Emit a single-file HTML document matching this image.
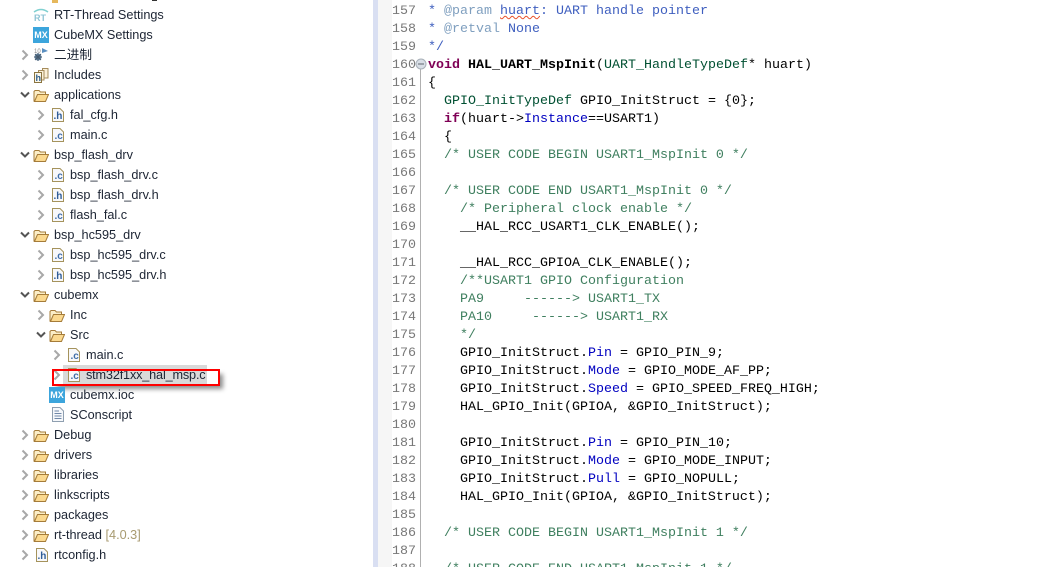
<!DOCTYPE html>
<html><head><meta charset="utf-8"><style>
html{margin:0;padding:0;background:#fff;width:1043px;height:567px;overflow:hidden}
body{margin:0;padding:0;background:#fff;width:1043px;height:567px;overflow:hidden;position:relative}
.r{position:absolute;height:20px;margin-top:1px;font:12.7px/20px "Liberation Sans","Noto Sans CJK SC",sans-serif;color:#1c2433;white-space:nowrap}
svg.i{position:absolute}
.l{position:absolute;left:428px;height:18px;margin-top:2px;font:13.33px/18px "Liberation Mono",monospace;color:#000;white-space:pre}
.n{position:absolute;left:392px;height:18px;margin-top:2px;font:13.33px/18px "Liberation Mono",monospace;color:#787878}
.c{color:#3f7f5f}.j{color:#3f5fbf}.t{color:#7f9fbf}.k{color:#7f0055;font-weight:bold}.f{color:#0000c0}.y{color:#005032}.b{font-weight:bold}
</style></head><body>
<svg width="0" height="0" style="position:absolute"><defs>
<symbol id="cl" viewBox="0 0 10 12"><path d="M2.5 1.500 7 6 2.500 10.500" fill="none" stroke="#a8a8a8" stroke-width="2"/></symbol>
<symbol id="op" viewBox="0 0 12 10"><path d="M2 2.500 6 6.500 10 2.500" fill="none" stroke="#555" stroke-width="2"/></symbol>
<symbol id="fo" viewBox="0 -1 16 14"><path d="M1 12.500V2.500L2 1.500H6L7.500 3H12.500V5.500H5L1.500 12.500" fill="#fbeec8" stroke="#a57c3a"/><path d="M1.500 12.500 4.500 5.500H15.500L12.500 12.500Z" fill="#fbd98f" stroke="#a57c3a"/></symbol>
<symbol id="fc" viewBox="0 0 12 14"><path d="M.5.500H8L11.500 4V13.500H.500Z" fill="#f8f8fa" stroke="#a5935c"/><text x="2.500" y="11" font-family="Liberation Sans" font-size="10" font-weight="bold" fill="#3f6da8">.c</text></symbol>
<symbol id="fh" viewBox="0 0 12 14"><path d="M.5.500H8L11.500 4V13.500H.500Z" fill="#f8f8fa" stroke="#a5935c"/><text x="1.500" y="11" font-family="Liberation Sans" font-size="10" font-weight="bold" fill="#2f5d98">.h</text></symbol>
</defs></svg>

<div style="position:absolute;left:52px;top:0;width:6px;height:3px;background:#e6b85c"></div>
<div style="position:absolute;left:152px;top:0;width:5px;height:1px;background:#333"></div>

<svg class="i" style="left:33px;top:8px" width="16" height="14" viewBox="0 0 16 14"><path d="M1 4Q8 -1 15 4" fill="none" stroke="#7fd0d0" stroke-width="1.500"/><text x="1" y="13" font-family="Liberation Sans" font-size="9" font-weight="bold" fill="#8fc4d4">RT</text></svg>
<div class="r" style="left:54px;top:4px">RT-Thread Settings</div>
<div style="position:absolute;left:33px;top:27px;width:16px;height:16px;background:#3ca5dc;color:#fff;font:bold 9px/16px 'Liberation Sans';text-align:center">MX</div>
<div class="r" style="left:54px;top:24px">CubeMX Settings</div>

<svg class="i" style="left:20px;top:49px" width="10" height="12"><use href="#cl"/></svg>
<svg class="i" style="left:33px;top:47px" width="16" height="16" viewBox="0 0 16 16"><path d="M9 1 15 4 9 6Z" fill="#5b8fc0"/><circle cx="5" cy="10" r="3.500" fill="#6a8ba8"/><path d="M1 10H9M5 6V14M2 7 8 13M8 7 2 13" stroke="#44586c"/><text x="1" y="6" font-family="Liberation Sans" font-size="6" fill="#888">10</text></svg>
<div class="r" style="left:54px;top:44px">二进制</div>

<svg class="i" style="left:20px;top:69px" width="10" height="12"><use href="#cl"/></svg>
<svg class="i" style="left:33px;top:67px" width="16" height="16" viewBox="0 0 16 16"><path d="M9.500 1.500H15V11H9.500Z" fill="#fbf0d8" stroke="#a58c5c"/><path d="M5.500 3.500H11V13H5.500Z" fill="#fbf0d8" stroke="#a58c5c"/><path d="M1.500 5.500H8.500V15.500H1.500Z" fill="#fbf7ea" stroke="#8a7440"/><text x="2.500" y="14" font-family="Liberation Sans" font-size="9" font-weight="bold" fill="#2f5d88">h</text></svg>
<div class="r" style="left:54px;top:64px">Includes</div>

<svg class="i" style="left:19px;top:90px" width="12" height="10"><use href="#op"/></svg>
<svg class="i" style="left:33px;top:88px" width="16" height="14"><use href="#fo"/></svg>
<div class="r" style="left:54px;top:84px">applications</div>

<svg class="i" style="left:36px;top:109px" width="10" height="12"><use href="#cl"/></svg>
<svg class="i" style="left:52px;top:108px" width="12" height="14"><use href="#fh"/></svg>
<div class="r" style="left:70px;top:104px">fal_cfg.h</div>

<svg class="i" style="left:36px;top:129px" width="10" height="12"><use href="#cl"/></svg>
<svg class="i" style="left:52px;top:128px" width="12" height="14"><use href="#fc"/></svg>
<div class="r" style="left:70px;top:124px">main.c</div>

<svg class="i" style="left:19px;top:150px" width="12" height="10"><use href="#op"/></svg>
<svg class="i" style="left:33px;top:148px" width="16" height="14"><use href="#fo"/></svg>
<div class="r" style="left:54px;top:144px">bsp_flash_drv</div>

<svg class="i" style="left:36px;top:169px" width="10" height="12"><use href="#cl"/></svg>
<svg class="i" style="left:52px;top:168px" width="12" height="14"><use href="#fc"/></svg>
<div class="r" style="left:70px;top:164px">bsp_flash_drv.c</div>

<svg class="i" style="left:36px;top:189px" width="10" height="12"><use href="#cl"/></svg>
<svg class="i" style="left:52px;top:188px" width="12" height="14"><use href="#fh"/></svg>
<div class="r" style="left:70px;top:184px">bsp_flash_drv.h</div>

<svg class="i" style="left:36px;top:209px" width="10" height="12"><use href="#cl"/></svg>
<svg class="i" style="left:52px;top:208px" width="12" height="14"><use href="#fc"/></svg>
<div class="r" style="left:70px;top:204px">flash_fal.c</div>

<svg class="i" style="left:19px;top:230px" width="12" height="10"><use href="#op"/></svg>
<svg class="i" style="left:33px;top:228px" width="16" height="14"><use href="#fo"/></svg>
<div class="r" style="left:54px;top:224px">bsp_hc595_drv</div>

<svg class="i" style="left:36px;top:249px" width="10" height="12"><use href="#cl"/></svg>
<svg class="i" style="left:52px;top:248px" width="12" height="14"><use href="#fc"/></svg>
<div class="r" style="left:70px;top:244px">bsp_hc595_drv.c</div>

<svg class="i" style="left:36px;top:269px" width="10" height="12"><use href="#cl"/></svg>
<svg class="i" style="left:52px;top:268px" width="12" height="14"><use href="#fh"/></svg>
<div class="r" style="left:70px;top:264px">bsp_hc595_drv.h</div>

<svg class="i" style="left:19px;top:290px" width="12" height="10"><use href="#op"/></svg>
<svg class="i" style="left:33px;top:288px" width="16" height="14"><use href="#fo"/></svg>
<div class="r" style="left:54px;top:284px">cubemx</div>

<svg class="i" style="left:36px;top:309px" width="10" height="12"><use href="#cl"/></svg>
<svg class="i" style="left:49px;top:308px" width="16" height="14"><use href="#fo"/></svg>
<div class="r" style="left:70px;top:304px">Inc</div>

<svg class="i" style="left:35px;top:330px" width="12" height="10"><use href="#op"/></svg>
<svg class="i" style="left:49px;top:328px" width="16" height="14"><use href="#fo"/></svg>
<div class="r" style="left:70px;top:324px">Src</div>

<svg class="i" style="left:52px;top:349px" width="10" height="12"><use href="#cl"/></svg>
<svg class="i" style="left:68px;top:348px" width="12" height="14"><use href="#fc"/></svg>
<div class="r" style="left:86px;top:344px">main.c</div>

<div style="position:absolute;left:63px;top:365px;width:144px;height:20px;background:#d9d9d9"></div>
<div style="position:absolute;left:54px;top:371px;width:166px;height:15px;box-shadow:3px 3px 5px rgba(0,0,0,.45)"></div>
<svg class="i" style="left:52px;top:369px" width="10" height="12"><use href="#cl"/></svg>
<svg class="i" style="left:68px;top:368px" width="12" height="14"><use href="#fc"/></svg>
<div class="r" style="left:86px;top:364px;letter-spacing:-.17px">stm32f1xx_hal_msp.c</div>
<div style="position:absolute;left:52px;top:369px;width:164px;height:13px;border:2px solid #f00"></div>

<div style="position:absolute;left:49px;top:387px;width:16px;height:16px;background:#3ca5dc;color:#fff;font:bold 9px/16px 'Liberation Sans';text-align:center">MX</div>
<div class="r" style="left:70px;top:384px">cubemx.ioc</div>
<svg class="i" style="left:52px;top:407px" width="12" height="15" viewBox="0 0 12 15"><path d="M.5.500H8L11.500 4V14.500H.500Z" fill="#f6f8fb" stroke="#8f9fb0"/><path d="M2.500 4H7M2.500 6.500H9.500M2.500 9H9.500M2.500 11.500H9.500" stroke="#7088a8"/></svg>
<div class="r" style="left:70px;top:404px">SConscript</div>

<svg class="i" style="left:20px;top:429px" width="10" height="12"><use href="#cl"/></svg>
<svg class="i" style="left:33px;top:428px" width="16" height="14"><use href="#fo"/></svg>
<div class="r" style="left:54px;top:424px">Debug</div>
<svg class="i" style="left:20px;top:449px" width="10" height="12"><use href="#cl"/></svg>
<svg class="i" style="left:33px;top:448px" width="16" height="14"><use href="#fo"/></svg>
<div class="r" style="left:54px;top:444px">drivers</div>
<svg class="i" style="left:20px;top:469px" width="10" height="12"><use href="#cl"/></svg>
<svg class="i" style="left:33px;top:468px" width="16" height="14"><use href="#fo"/></svg>
<div class="r" style="left:54px;top:464px">libraries</div>
<svg class="i" style="left:20px;top:489px" width="10" height="12"><use href="#cl"/></svg>
<svg class="i" style="left:33px;top:488px" width="16" height="14"><use href="#fo"/></svg>
<div class="r" style="left:54px;top:484px">linkscripts</div>
<svg class="i" style="left:20px;top:509px" width="10" height="12"><use href="#cl"/></svg>
<svg class="i" style="left:33px;top:508px" width="16" height="14"><use href="#fo"/></svg>
<div class="r" style="left:54px;top:504px">packages</div>
<svg class="i" style="left:20px;top:529px" width="10" height="12"><use href="#cl"/></svg>
<svg class="i" style="left:33px;top:528px" width="16" height="14"><use href="#fo"/></svg>
<div class="r" style="left:54px;top:524px">rt-thread <span style="color:#a89a70">[4.0.3]</span></div>
<svg class="i" style="left:20px;top:549px" width="10" height="12"><use href="#cl"/></svg>
<svg class="i" style="left:36px;top:548px" width="12" height="14"><use href="#fh"/></svg>
<div class="r" style="left:54px;top:544px">rtconfig.h</div>

<div style="position:absolute;left:373px;top:0;width:5px;height:567px;background:#d9dff2"></div>
<div style="position:absolute;left:378px;top:0;width:14px;height:567px;background:#f6f6f6"></div>
<div style="position:absolute;left:420px;top:64px;width:1px;height:503px;background:#b0b0b0"></div>
<svg class="i" style="left:415px;top:58px" width="12" height="12"><circle cx="6" cy="6" r="5" fill="#d8dee6" stroke="#a8b0b8"/><path d="M3 6H9" stroke="#606870"/></svg>

<div class="n" style="top:1px">157</div><div class="n" style="top:19px">158</div><div class="n" style="top:37px">159</div><div class="n" style="top:55px">160</div><div class="n" style="top:73px">161</div><div class="n" style="top:91px">162</div><div class="n" style="top:109px">163</div><div class="n" style="top:127px">164</div><div class="n" style="top:145px">165</div><div class="n" style="top:163px">166</div><div class="n" style="top:181px">167</div><div class="n" style="top:199px">168</div><div class="n" style="top:217px">169</div><div class="n" style="top:235px">170</div><div class="n" style="top:253px">171</div><div class="n" style="top:271px">172</div><div class="n" style="top:289px">173</div><div class="n" style="top:307px">174</div><div class="n" style="top:325px">175</div><div class="n" style="top:343px">176</div><div class="n" style="top:361px">177</div><div class="n" style="top:379px">178</div><div class="n" style="top:397px">179</div><div class="n" style="top:415px">180</div><div class="n" style="top:433px">181</div><div class="n" style="top:451px">182</div><div class="n" style="top:469px">183</div><div class="n" style="top:487px">184</div><div class="n" style="top:505px">185</div><div class="n" style="top:523px">186</div><div class="n" style="top:541px">187</div><div class="n" style="top:559px">188</div>

<div class="l j" style="top:1px">* <span class="t">@param</span> <span style="text-decoration:underline wavy #e8502a 1px">huart</span>: UART handle pointer</div>
<div class="l j" style="top:19px">* <span class="t">@retval</span> None</div>
<div class="l j" style="top:37px">*/</div>
<div class="l" style="top:55px"><span class="k">void</span> <span class="b">HAL_UART_MspInit</span>(<span class="y">UART_HandleTypeDef</span>* huart)</div>
<div class="l" style="top:73px">{</div>
<div class="l" style="top:91px">  <span class="y">GPIO_InitTypeDef</span> GPIO_InitStruct = {0};</div>
<div class="l" style="top:109px">  <span class="k">if</span>(huart-&gt;<span class="f">Instance</span>==USART1)</div>
<div class="l" style="top:127px">  {</div>
<div class="l c" style="top:145px">  /* USER CODE BEGIN USART1_MspInit 0 */</div>
<div class="l c" style="top:181px">  /* USER CODE END USART1_MspInit 0 */</div>
<div class="l c" style="top:199px">    /* Peripheral clock enable */</div>
<div class="l" style="top:217px">    __HAL_RCC_USART1_CLK_ENABLE();</div>
<div class="l" style="top:253px">    __HAL_RCC_GPIOA_CLK_ENABLE();</div>
<div class="l c" style="top:271px">    /**USART1 GPIO Configuration</div>
<div class="l c" style="top:289px">    PA9     ------&gt; USART1_TX</div>
<div class="l c" style="top:307px">    PA10     ------&gt; USART1_RX</div>
<div class="l c" style="top:325px">    */</div>
<div class="l" style="top:343px">    GPIO_InitStruct.<span class="f">Pin</span> = GPIO_PIN_9;</div>
<div class="l" style="top:361px">    GPIO_InitStruct.<span class="f">Mode</span> = GPIO_MODE_AF_PP;</div>
<div class="l" style="top:379px">    GPIO_InitStruct.<span class="f">Speed</span> = GPIO_SPEED_FREQ_HIGH;</div>
<div class="l" style="top:397px">    HAL_GPIO_Init(GPIOA, &amp;GPIO_InitStruct);</div>
<div class="l" style="top:433px">    GPIO_InitStruct.<span class="f">Pin</span> = GPIO_PIN_10;</div>
<div class="l" style="top:451px">    GPIO_InitStruct.<span class="f">Mode</span> = GPIO_MODE_INPUT;</div>
<div class="l" style="top:469px">    GPIO_InitStruct.<span class="f">Pull</span> = GPIO_NOPULL;</div>
<div class="l" style="top:487px">    HAL_GPIO_Init(GPIOA, &amp;GPIO_InitStruct);</div>
<div class="l c" style="top:523px">  /* USER CODE BEGIN USART1_MspInit 1 */</div>
<div class="l c" style="top:559px">  /* USER CODE END USART1_MspInit 1 */</div>
</body></html>
